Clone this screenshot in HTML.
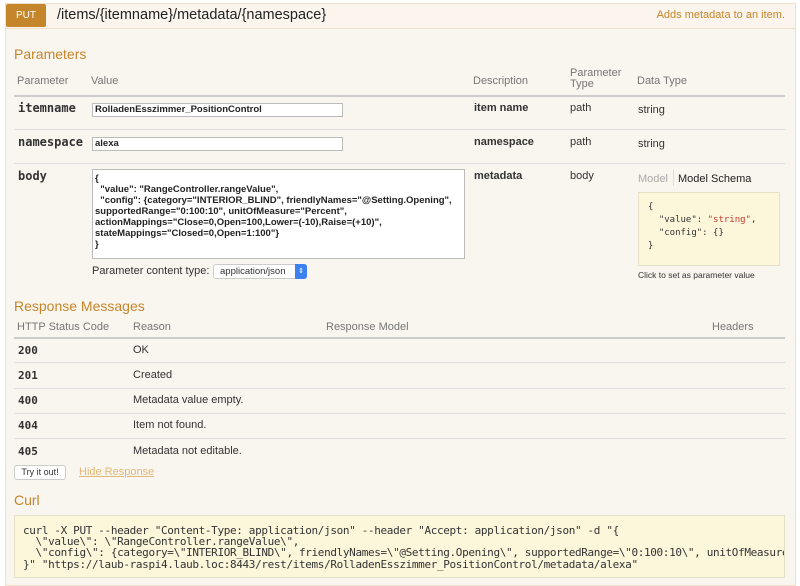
<!DOCTYPE html>
<html><head><meta charset="utf-8"><style>
*{margin:0;padding:0;box-sizing:border-box}
body{width:800px;height:586px;background:#fff;font-family:"Liberation Sans",sans-serif;color:#333;position:relative;overflow:hidden;font-size:11px}
.a{position:absolute;white-space:nowrap}
.box{position:absolute;left:5px;top:3px;width:791px;height:583px;background:#f9f5ef;border:1px solid #f0e0ca}
.hdr{position:absolute;left:5px;top:3px;width:791px;height:26px;background:#fbf5ee;border:1px solid #f0e0ca}
.put{position:absolute;left:6px;top:4px;width:40px;height:23px;background:#c5862b;color:#fff;font-size:10px;display:flex;align-items:center;justify-content:center;border-radius:2px}
h4{position:absolute;color:#c5862b;font-weight:normal;font-size:14px;white-space:nowrap}
.line{position:absolute;left:14px;width:771px;height:1px;background:#ddd}
.th{color:#777;font-size:11px}
.mono{font-family:"DejaVu Sans Mono","Liberation Mono",monospace}
.b{font-weight:bold}
.inp{position:absolute;background:#fff;border:1px solid #bbb;font-family:"Liberation Sans",sans-serif;font-size:9.5px;font-weight:bold;padding-left:2px;color:#222}
</style></head><body>
<div class="box"></div>
<div class="hdr"></div>
<div class="put">PUT</div>
<div class="a" style="left:57px;top:7px;font-size:14.5px;color:#222">/items/{itemname}/metadata/{namespace}</div>
<div class="a" style="right:15px;top:9px;font-size:11px;color:#c5862b">Adds metadata to an item.</div>

<h4 style="left:14px;top:46px">Parameters</h4>
<div class="a th" style="left:17px;top:75px">Parameter</div>
<div class="a th" style="left:91px;top:75px">Value</div>
<div class="a th" style="left:473px;top:75px">Description</div>
<div class="a th" style="left:570px;top:68px;line-height:11px">Parameter<br>Type</div>
<div class="a th" style="left:637px;top:75px">Data Type</div>
<div class="line" style="top:95px;height:2px;background:#ccc"></div>

<div class="a mono b" style="left:18px;top:101px;font-size:12px">itemname</div>
<div class="inp" style="left:92px;top:103px;width:251px;height:14px;line-height:12px">RolladenEsszimmer_PositionControl</div>
<div class="a b" style="left:474px;top:102px">item name</div>
<div class="a" style="left:570px;top:102px">path</div>
<div class="a" style="left:638px;top:104px">string</div>
<div class="line" style="top:129px"></div>

<div class="a mono b" style="left:18px;top:135px;font-size:12px">namespace</div>
<div class="inp" style="left:92px;top:137px;width:251px;height:14px;line-height:12px">alexa</div>
<div class="a b" style="left:474px;top:136px">namespace</div>
<div class="a" style="left:570px;top:136px">path</div>
<div class="a" style="left:638px;top:138px">string</div>
<div class="line" style="top:163px"></div>

<div class="a mono b" style="left:18px;top:169px;font-size:12px">body</div>
<div class="inp" style="left:92px;top:169px;width:373px;height:90px;font-size:9.5px;line-height:11px;padding-top:3px;white-space:pre;overflow:hidden">{
  "value": "RangeController.rangeValue",
  "config": {category="INTERIOR_BLIND", friendlyNames="@Setting.Opening",
supportedRange="0:100:10", unitOfMeasure="Percent",
actionMappings="Close=0,Open=100,Lower=(-10),Raise=(+10)",
stateMappings="Closed=0,Open=1:100"}
}</div>
<div class="a" style="left:92px;top:265px;font-size:11px">Parameter content type:</div>
<div class="a" style="left:213px;top:264px;width:94px;height:15px;background:#fff;border:1px solid #ccc;border-radius:3px;font-size:9.5px;line-height:13px;padding-left:6px">application/json</div>
<div class="a" style="left:295px;top:264px;width:12px;height:15px;background:#3b82f0;border-radius:0 3px 3px 0;color:#fff;font-size:7px;text-align:center;line-height:15px">⇕</div>
<div class="a b" style="left:474px;top:170px">metadata</div>
<div class="a" style="left:570px;top:170px">body</div>
<div class="a" style="left:638px;top:173px;color:#aaa">Model</div>
<div class="a" style="left:673px;top:170px;width:1px;height:16px;background:#ddd"></div>
<div class="a" style="left:678px;top:173px;color:#222">Model Schema</div>
<div class="a mono" style="left:638px;top:192px;width:142px;height:74px;background:#fcf6db;border:1px solid #e5e0c6;font-size:9px;line-height:13px;padding:8px 0 0 9px;white-space:pre">{
  "value": <span style="color:#c0392b">"string"</span>,
  "config": {}
}</div>
<div class="a" style="left:638px;top:270px;font-size:8.5px;color:#333">Click to set as parameter value</div>

<h4 style="left:14px;top:298px">Response Messages</h4>
<div class="a th" style="left:17px;top:321px">HTTP Status Code</div>
<div class="a th" style="left:133px;top:321px">Reason</div>
<div class="a th" style="left:326px;top:321px">Response Model</div>
<div class="a th" style="left:712px;top:321px">Headers</div>
<div class="line" style="top:337px;height:2px;background:#ccc"></div>
<div class="a mono b" style="left:18px;top:344px">200</div><div class="a" style="left:133px;top:344px">OK</div>
<div class="line" style="top:362px"></div>
<div class="a mono b" style="left:18px;top:369px">201</div><div class="a" style="left:133px;top:369px">Created</div>
<div class="line" style="top:388px"></div>
<div class="a mono b" style="left:18px;top:394px">400</div><div class="a" style="left:133px;top:394px">Metadata value empty.</div>
<div class="line" style="top:413px"></div>
<div class="a mono b" style="left:18px;top:419px">404</div><div class="a" style="left:133px;top:419px">Item not found.</div>
<div class="line" style="top:438px"></div>
<div class="a mono b" style="left:18px;top:445px">405</div><div class="a" style="left:133px;top:445px">Metadata not editable.</div>

<div class="a" style="left:14px;top:465px;width:52px;height:15px;background:#fff;border:1px solid #ccc;border-radius:3px;font-size:9px;text-align:center;line-height:13px">Try it out!</div>
<div class="a" style="left:79px;top:466px;color:#e0b878;text-decoration:underline">Hide Response</div>

<h4 style="left:14px;top:492px">Curl</h4>
<div class="a mono" style="left:14px;top:515px;width:771px;height:63px;background:#fcf6db;border:1px solid #e5e0c6;font-size:11px;line-height:11.2px;padding:9px 0 0 8px;white-space:pre;overflow:hidden;letter-spacing:-0.35px">curl -X PUT --header "Content-Type: application/json" --header "Accept: application/json" -d "{
  \"value\": \"RangeController.rangeValue\",
  \"config\": {category=\"INTERIOR_BLIND\", friendlyNames=\"@Setting.Opening\", supportedRange=\"0:100:10\", unitOfMeasure
}" "https://laub-raspi4.laub.loc:8443/rest/items/RolladenEsszimmer_PositionControl/metadata/alexa"</div>
</body></html>
